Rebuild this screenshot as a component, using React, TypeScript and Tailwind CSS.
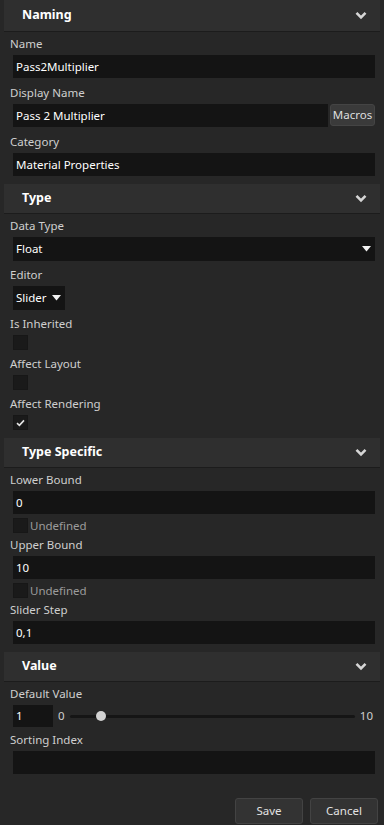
import React, { useState } from 'react';

const font = { fontFamily: '"Noto Sans", "Open Sans", sans-serif' };

const Chevron = () => (
  <svg width="12" height="9" viewBox="0 0 12 9" className="mr-[13px]">
    <polyline points="1.5,1.8 6,6.3 10.5,1.8" fill="none" stroke="#d6d6d6" strokeWidth="2.6" />
  </svg>
);

const Caret = () => (
  <svg width="9" height="6" viewBox="0 0 9 6">
    <polygon points="0,0 9,0 4.5,5.5" fill="#f2f2f2" />
  </svg>
);

const Header: React.FC<{ title: string; first?: boolean }> = ({ title, first }) => (
  <div
    className={`flex items-center justify-between bg-[#2f2f2f] border-b border-[#1c1c1c] ${
      first ? 'h-[32px]' : 'h-[30px]'
    }`}
  >
    <span className="pl-[18px] text-[12.5px] font-bold text-white">{title}</span>
    <Chevron />
  </div>
);

const Label: React.FC<{ children: React.ReactNode }> = ({ children }) => (
  <div className="ml-[-3px] h-[17px] mb-[3px] text-[11.5px] leading-[17px] text-[#cfcfcf]">{children}</div>
);

const TextBox: React.FC<{ value: string; className?: string }> = ({ value, className }) => (
  <div className={`h-[23px] bg-[#141414] flex items-center px-[3px] text-[11.5px] text-white ${className ?? ''}`}>
    {value}
  </div>
);

const Check: React.FC<{ checked?: boolean }> = ({ checked }) => (
  <div className="w-[15px] h-[15px] bg-[#1a1a1a] border border-[#171717] flex items-center justify-center shrink-0">
    {checked && (
      <svg width="9" height="8" viewBox="0 0 9 8">
        <polyline points="1,4.2 3.4,6.4 8,1.4" fill="none" stroke="#e4e4e4" strokeWidth="1.6" />
      </svg>
    )}
  </div>
);

const Undefined = () => (
  <div className="flex items-center h-[15px] mt-[4px]">
    <Check />
    <span className="ml-[2px] text-[11.5px] text-[#9c9c9c]">Undefined</span>
  </div>
);

export default function App() {
  const [defaultValue] = useState(1);
  const pct = ((defaultValue - 0) / 10) * 100;

  return (
    <div style={font} className="w-[384px] h-[825px] bg-[#272727] px-[4px] overflow-hidden">
      <Header title="Naming" first />
      <div className="pl-[9px] pr-[5px] pt-[3px] pb-[8px] flex flex-col gap-[6px]">
        <div>
          <Label>Name</Label>
          <TextBox value="Pass2Multiplier" />
        </div>
        <div>
          <Label>Display Name</Label>
          <div className="flex gap-[2px]">
            <TextBox value="Pass 2 Multiplier" className="flex-1" />
            <button className="h-[22px] w-[45px] rounded-[3px] bg-[#3a3a3a] border border-[#444] text-[11.5px] text-[#dedede] leading-none px-0">
              Macros
            </button>
          </div>
        </div>
        <div>
          <Label>Category</Label>
          <TextBox value="Material Properties" />
        </div>
      </div>

      <Header title="Type" />
      <div className="pl-[9px] pr-[5px] pt-[3px] pb-[8px] flex flex-col gap-[5px]">
        <div>
          <Label>Data Type</Label>
          <div className="h-[24px] bg-[#141414] flex items-center justify-between pl-[3px] pr-[4px] text-[11.5px] text-white">
            <span>Float</span>
            <Caret />
          </div>
        </div>
        <div>
          <Label>Editor</Label>
          <div className="h-[24px] w-[52px] bg-[#141414] flex items-center gap-[5px] pl-[3px] text-[11.5px] text-white">
            <span>Slider</span>
            <Caret />
          </div>
        </div>
        <div>
          <Label>Is Inherited</Label>
          <Check />
        </div>
        <div>
          <Label>Affect Layout</Label>
          <Check />
        </div>
        <div>
          <Label>Affect Rendering</Label>
          <Check checked />
        </div>
      </div>

      <Header title="Type Specific" />
      <div className="pl-[9px] pr-[5px] pt-[3px] pb-[8px] flex flex-col">
        <div>
          <Label>Lower Bound</Label>
          <TextBox value="0" />
          <Undefined />
        </div>
        <div className="mt-[3px]">
          <Label>Upper Bound</Label>
          <TextBox value="10" />
          <Undefined />
        </div>
        <div className="mt-[3px]">
          <Label>Slider Step</Label>
          <TextBox value="0,1" />
        </div>
      </div>

      <Header title="Value" />
      <div className="pl-[9px] pr-[5px] pt-[3px] flex flex-col gap-[4px]">
        <div>
          <Label>Default Value</Label>
          <div className="flex items-center h-[22px]">
            <div className="w-[40px] h-[22px] bg-[#141414] flex items-center px-[3px] text-[11.5px] text-white">
              {defaultValue}
            </div>
            <span className="ml-[5px] text-[11.5px] text-[#cfcfcf]">0</span>
            <div className="relative flex-1 mx-[5px] h-[3px] bg-[#151515] rounded-full">
              <div
                className="absolute top-1/2 w-[10px] h-[10px] -mt-[5px] -ml-[5px] rounded-full bg-[#d2d2d2]"
                style={{ left: `${pct + 1}%` }}
              />
            </div>
            <span className="text-[11.5px] text-[#cfcfcf] mr-[2px]">10</span>
          </div>
        </div>
        <div>
          <Label>Sorting Index</Label>
          <TextBox value="" />
        </div>
      </div>

      <div className="flex justify-end gap-[7px] pr-[2px] mt-[24px]">
        <button className="w-[68px] h-[26px] rounded-[3px] bg-[#333333] border border-[#434343] text-[11.5px] text-[#e2e2e2]">
          Save
        </button>
        <button className="w-[68px] h-[26px] rounded-[3px] bg-[#333333] border border-[#434343] text-[11.5px] text-[#e2e2e2]">
          Cancel
        </button>
      </div>
    </div>
  );
}
